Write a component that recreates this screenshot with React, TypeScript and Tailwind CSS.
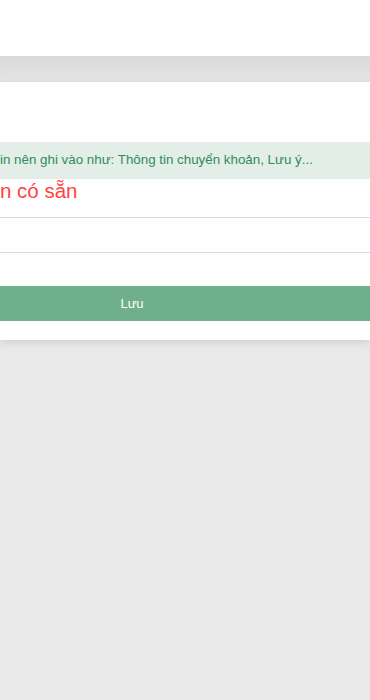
export default function App() {
  return (
    <div className="min-h-screen overflow-hidden bg-[#e9e9e9] font-['Liberation_Sans',Arial,sans-serif]">
      <header className="h-14 bg-white" />
      <div className="h-[26px] bg-gradient-to-b from-[#d9d9d9] to-[#e4e4e4]" />

      <section className="relative h-[258px] bg-white pt-[60px] shadow-[0_3px_8px_rgba(0,0,0,0.1)]">
        {/* Hint banner */}
        <div className="flex h-[37px] items-center whitespace-nowrap bg-[#e3eee8] text-[13.35px] text-[#2f8c58]">
          in nên ghi vào như: Thông tin chuyển khoản, Lưu ý...
        </div>

        <div className="h-[39px] border-b border-[#d9d9e1] pt-[1px] text-[20.5px] leading-[21px] whitespace-nowrap text-[#ff4343]">
          n có sẵn
        </div>
        <div className="h-[35px] border-b border-[#d9d9e1]" />

        <div className="pt-[33px]">
          <button className="-ml-[106px] h-[35px] w-[calc(100%+106px)] bg-[#6faf8b] text-[13px] text-white">
            Lưu
          </button>
        </div>
      </section>
    </div>
  );
}
